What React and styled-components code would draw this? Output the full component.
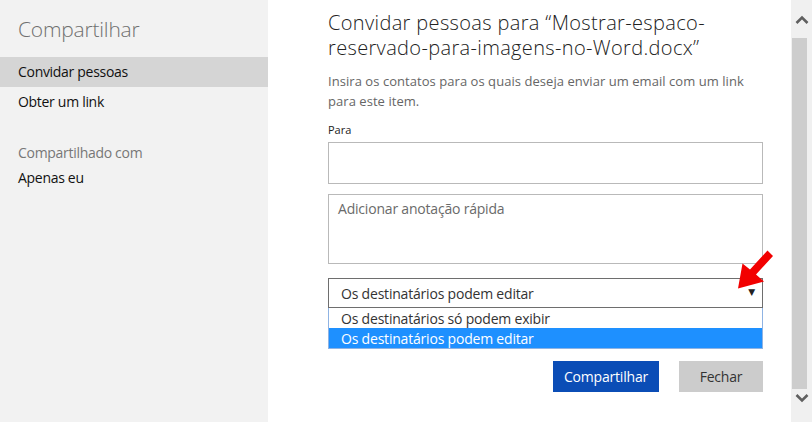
import React from "react";
import styled, { createGlobalStyle } from "styled-components";

const Global = createGlobalStyle`
  html, body { margin: 0; padding: 0; background: #fff; overflow: hidden; }
  body { font-family: "Open Sans", "Noto Sans", sans-serif; }
  * { box-sizing: border-box; }
`;

const Page = styled.div`
  display: flex;
  width: 812px;
  height: 422px;
  position: relative;
  overflow: hidden;
`;

const Sidebar = styled.aside`
  width: 268px;
  flex: none;
  background: #f2f2f2;
  display: flex;
  flex-direction: column;
`;

const SideTitle = styled.h1`
  margin: 0;
  padding: 15px 18px 0;
  height: 57px;
  font-size: 21px;
  line-height: 28px;
  font-weight: 300;
  color: #707070;
  letter-spacing: -0.2px;
`;

const NavItem = styled.div`
  height: ${(p) => (p.$compact ? 25 : 30)}px;
  line-height: ${(p) => (p.$compact ? 25 : 30)}px;
  padding-left: 18px;
  font-size: 14px;
  color: #111;
  background: ${(p) => (p.$active ? "#d5d5d5" : "transparent")};
  letter-spacing: -0.3px;
`;

const GroupLabel = styled.div`
  margin-top: 23px;
  height: 25px;
  line-height: 25px;
  padding-left: 18px;
  font-size: 14px;
  color: #777;
  letter-spacing: -0.3px;
`;

const Main = styled.main`
  flex: 1;
  padding: 10px 0 0 60px;
  display: flex;
  flex-direction: column;
`;

const Content = styled.div`
  width: 435px;
  display: flex;
  flex-direction: column;
`;

const Title = styled.h2`
  margin: 0;
  font-size: 20px;
  line-height: 25px;
  font-weight: 300;
  color: #222;
  letter-spacing: 0.35px;
`;

const Desc = styled.p`
  margin: 11px 0 0;
  font-size: 13px;
  line-height: 20px;
  color: #666;
  letter-spacing: 0.05px;
`;

const Label = styled.label`
  margin-top: 11px;
  font-size: 11px;
  line-height: 16px;
  color: #222;
`;

const Field = styled.div`
  margin-top: ${(p) => p.$mt}px;
  height: ${(p) => p.$h}px;
  border: 1px solid #b9b9b9;
  background: #fff;
  padding: 5px 9px;
  font-size: 14px;
  line-height: 18px;
  color: #6a6a6a;
  letter-spacing: -0.2px;
`;

const Select = styled.div`
  margin-top: 14px;
  height: 30px;
  border: 1px solid #6e6e6e;
  background: #fff;
  display: flex;
  align-items: center;
  justify-content: space-between;
  padding: 1px 7px 0 12px;
  font-size: 14px;
  color: #333;
  letter-spacing: -0.2px;
`;

const Caret = styled.span`
  font-size: 9px;
  color: #222;
  margin-top: -4px;
  font-family: "DejaVu Sans", sans-serif;
`;

const List = styled.div`
  border: 1px solid #8fb3e3;
  border-top: none;
  display: flex;
  flex-direction: column;
  background: #fff;
`;

const Option = styled.div`
  height: 20px;
  line-height: 21px;
  padding-left: 12px;
  font-size: 14px;
  letter-spacing: -0.2px;
  color: ${(p) => (p.$selected ? "#fff" : "#333")};
  background: ${(p) => (p.$selected ? "#1e90ff" : "#fff")};
`;

const Actions = styled.div`
  margin-top: 12px;
  display: flex;
  justify-content: flex-end;
  gap: 20px;
`;

const Button = styled.button`
  height: 31px;
  width: ${(p) => p.$w}px;
  border: none;
  padding: 0;
  font-family: inherit;
  font-size: 14px;
  letter-spacing: -0.2px;
  background: ${(p) => (p.$primary ? "#0b4db6" : "#cccccc")};
  color: ${(p) => (p.$primary ? "#fff" : "#333")};
`;

const Scrollbar = styled.div`
  width: 21px;
  flex: none;
  margin-left: auto;
  background: #f0f0f0;
  display: flex;
  flex-direction: column;
  align-items: center;
`;

const ScrollBtn = styled.div`
  height: ${(p) => p.$h}px;
  width: 100%;
  display: flex;
  align-items: ${(p) => (p.$up ? "center" : "flex-start")};
  justify-content: center;
  padding-top: ${(p) => (p.$up ? 1 : 5)}px;
`;

const Thumb = styled.div`
  width: 15px;
  margin-left: -4px;
  height: 351px;
  background: #cdcdcd;
`;

const Overlay = styled.svg`
  position: absolute;
  left: 0;
  top: 0;
  pointer-events: none;
`;

const Chevron = ({ up }) => (
  <svg width="14" height="9" viewBox="0 0 14 9">
    <path
      d={up ? "M1.5 8 L7 2.5 L12.5 8" : "M1.5 1 L7 6.5 L12.5 1"}
      fill="none"
      stroke="#5f5f5f"
      strokeWidth="2.6"
    />
  </svg>
);

export default function App() {
  return (
    <>
      <Global />
      <Page>
        <Sidebar>
          <SideTitle>Compartilhar</SideTitle>
          <NavItem $active>Convidar pessoas</NavItem>
          <NavItem>Obter um link</NavItem>
          <GroupLabel>Compartilhado com</GroupLabel>
          <NavItem $compact>Apenas eu</NavItem>
        </Sidebar>
        <Main>
          <Content>
            <Title>
              Convidar pessoas para “Mostrar-espaco-
              <br />
              reservado-para-imagens-no-Word.docx”
            </Title>
            <Desc>
              Insira os contatos para os quais deseja enviar um email com um link
              <br />
              para este item.
            </Desc>
            <Label>Para</Label>
            <Field $mt={4} $h={42} />
            <Field $mt={10} $h={70}>Adicionar anotação rápida</Field>
            <Select>
              <span>Os destinatários podem editar</span>
              <Caret>▼</Caret>
            </Select>
            <List>
              <Option>Os destinatários só podem exibir</Option>
              <Option $selected>Os destinatários podem editar</Option>
            </List>
            <Actions>
              <Button $primary $w={106}>Compartilhar</Button>
              <Button $w={84}>Fechar</Button>
            </Actions>
          </Content>
        </Main>
        <Scrollbar>
          <ScrollBtn $up $h={38}>
            <Chevron up />
          </ScrollBtn>
          <Thumb />
          <ScrollBtn $h={33}>
            <Chevron />
          </ScrollBtn>
        </Scrollbar>
        <Overlay width="812" height="422" viewBox="0 0 812 422">
          <polygon
            points="738,288.5 742.5,263.5 750,269.5 767.5,250.5 773,256 756,274.5 764,281.5"
            fill="#f20000"
          />
        </Overlay>
      </Page>
    </>
  );
}
